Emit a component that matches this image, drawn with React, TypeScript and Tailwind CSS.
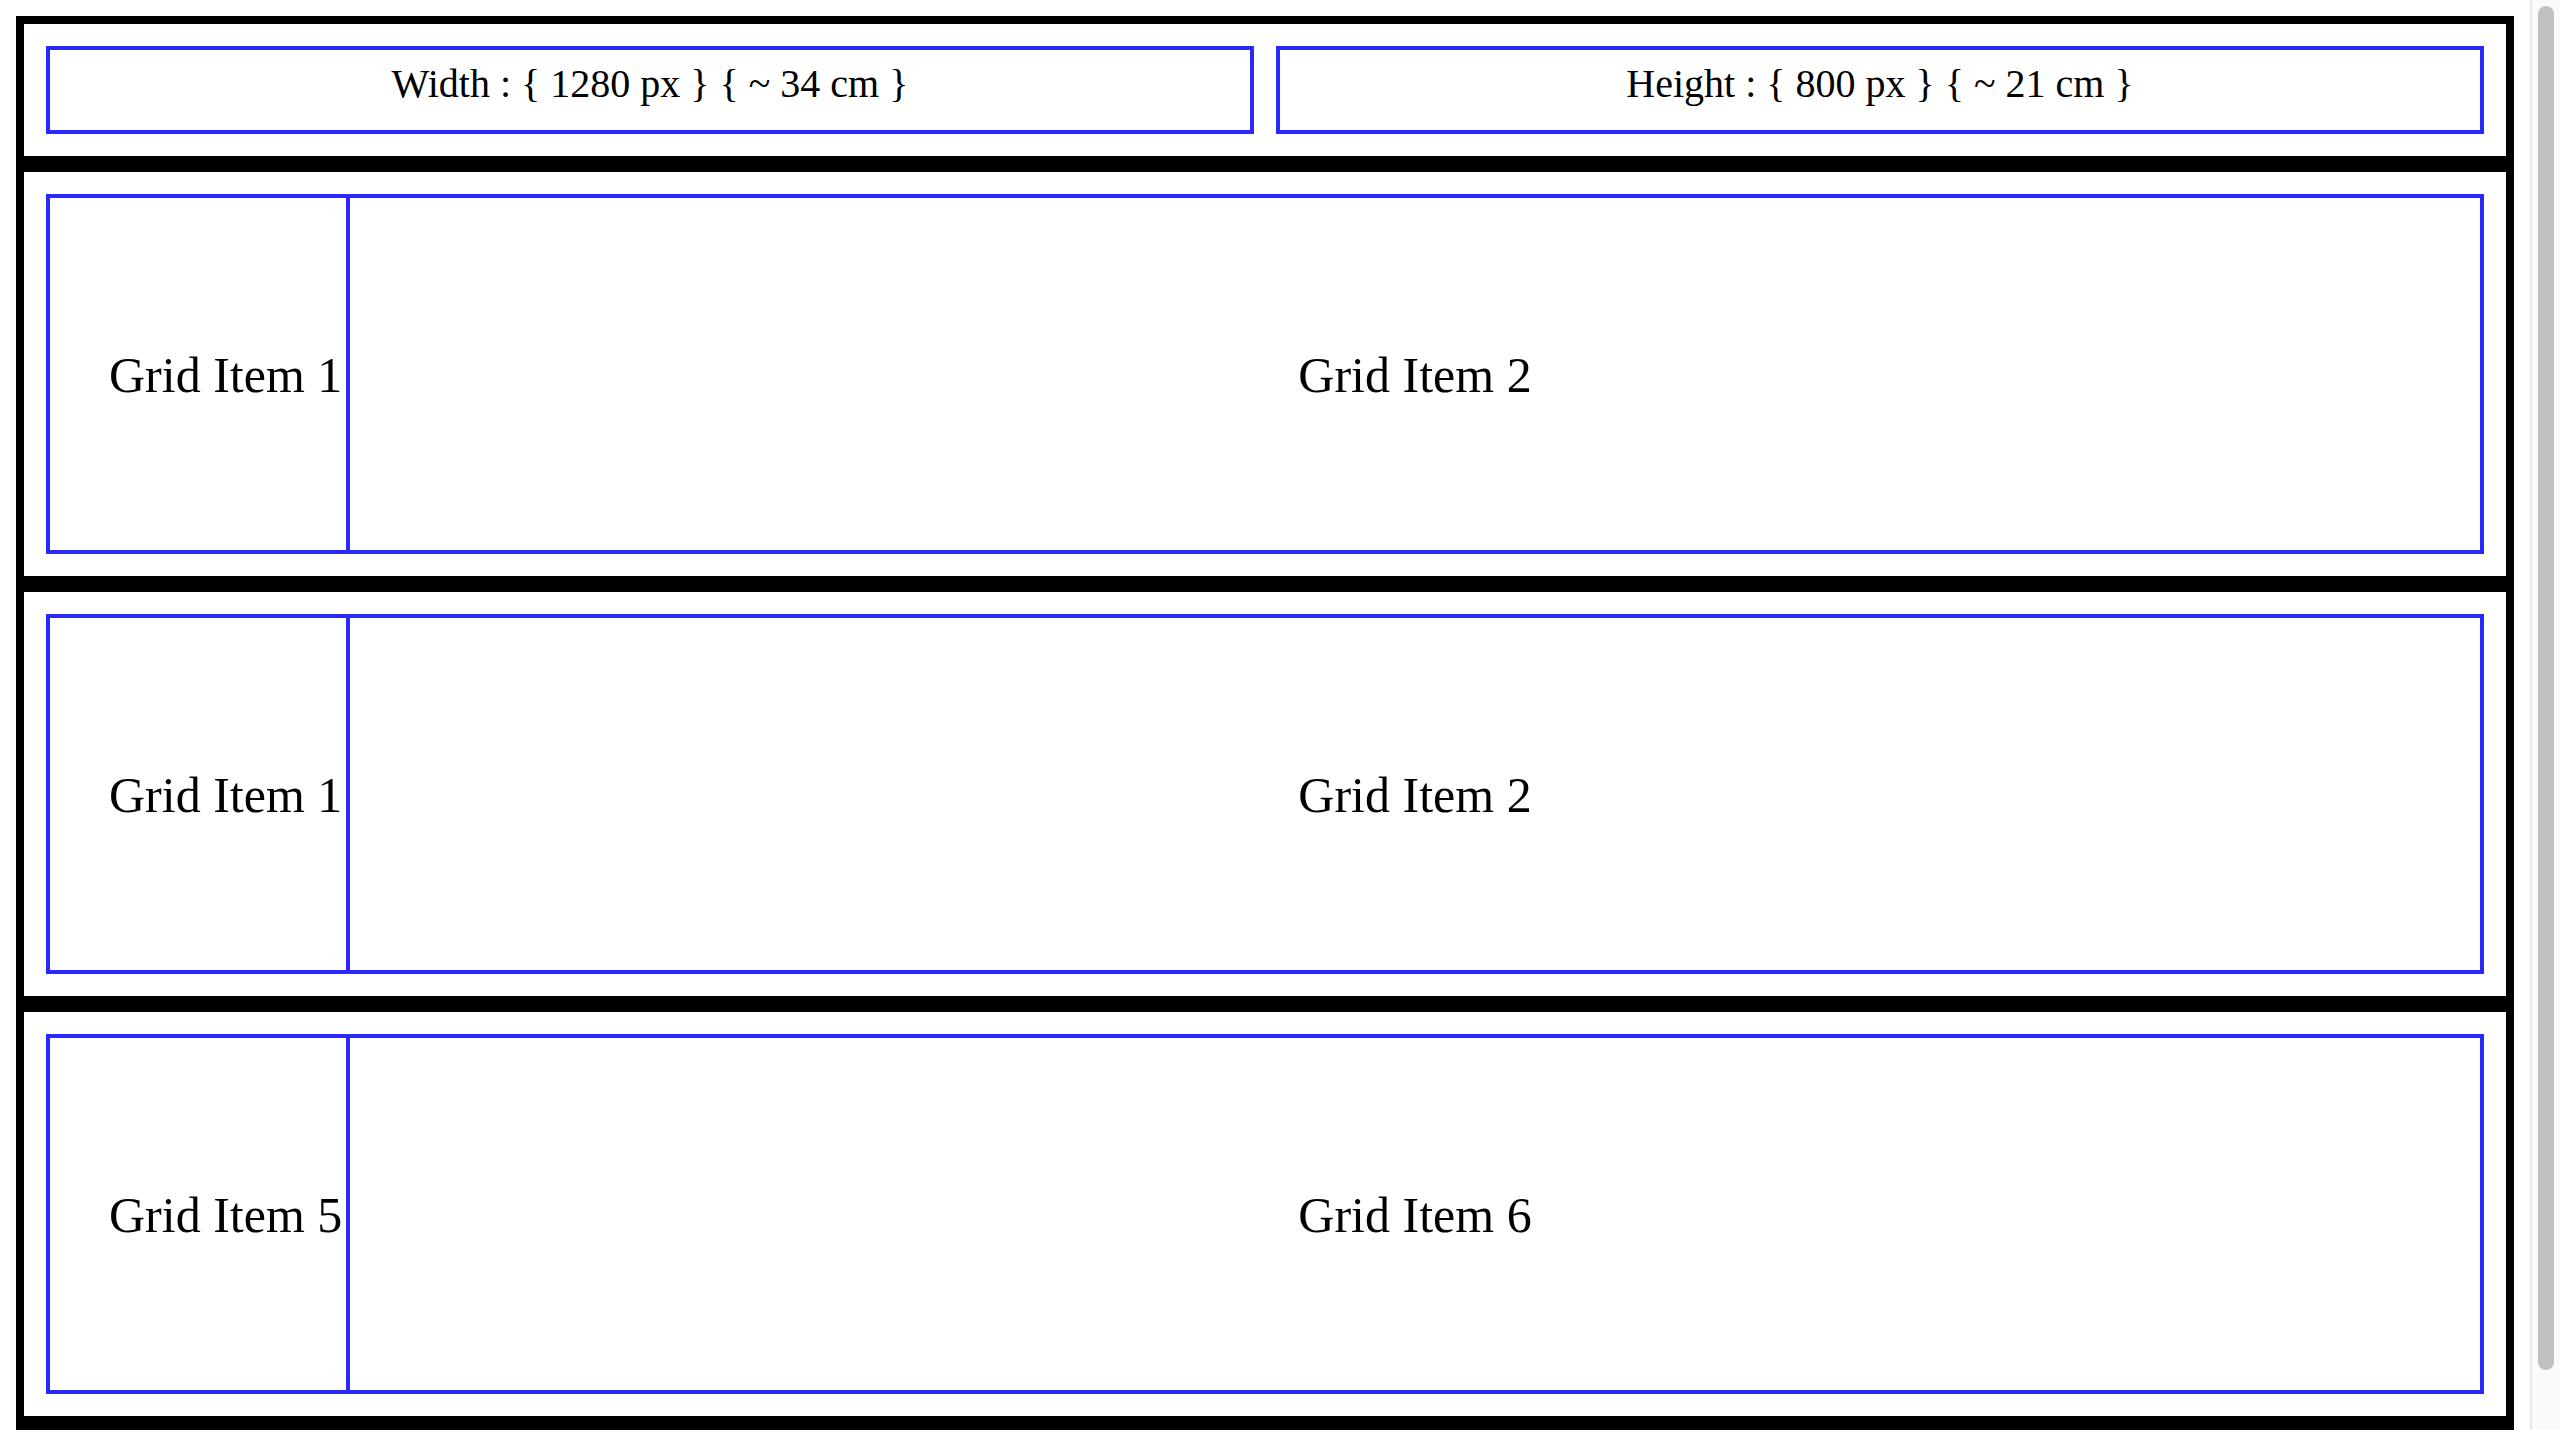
import React from "react";

const serif = { fontFamily: '"Liberation Serif", "Times New Roman", serif' };

function Row({ a, b }: { a?: string; b?: string }) {
  return (
    <section className="border-[8px] border-black p-[22px]">
      <div className="grid h-[360px] grid-cols-[300px_1fr] border-[4px] border-[#2828ff]">
        <div className="flex items-center whitespace-nowrap border-r-[4px] border-[#2828ff] pl-[59px] pt-[2px] text-[50px] leading-[58px] text-black">
          {a}
        </div>
        <div className="flex items-center justify-center whitespace-nowrap pt-[2px] text-[50px] leading-[58px] text-black">
          {b}
        </div>
      </div>
    </section>
  );
}

export default function App() {
  return (
    <div className="flex h-[1430px] w-[2560px] overflow-hidden bg-white" style={serif}>
      <div className="min-w-0 flex-1 pl-[16px] pr-[16px] pt-[16px]">
        <section className="border-[8px] border-black p-[22px]">
          <div className="flex gap-[22px]">
            <div className="h-[88px] flex-1 border-[4px] border-[#2828ff] pt-[11px] text-center text-[40px] leading-[46px] text-black">
              Width : {"{"} 1280 px {"}"} {"{"} ~ 34 cm {"}"}
            </div>
            <div className="h-[88px] flex-1 border-[4px] border-[#2828ff] pt-[11px] text-center text-[40px] leading-[46px] text-black">
              Height : {"{"} 800 px {"}"} {"{"} ~ 21 cm {"}"}
            </div>
          </div>
        </section>
        <Row a="Grid Item 1" b="Grid Item 2" />
        <Row a="Grid Item 1" b="Grid Item 2" />
        <Row a="Grid Item 5" b="Grid Item 6" />
        <Row />
      </div>
      <div className="flex w-[30px] shrink-0 border-l-[2px] border-[#e8e8e8] bg-[#fafafa] pl-[6px] pt-[6px]">
        <div className="h-[1364px] w-[16px] rounded-full bg-[#c1c1c1]" />
      </div>
    </div>
  );
}
